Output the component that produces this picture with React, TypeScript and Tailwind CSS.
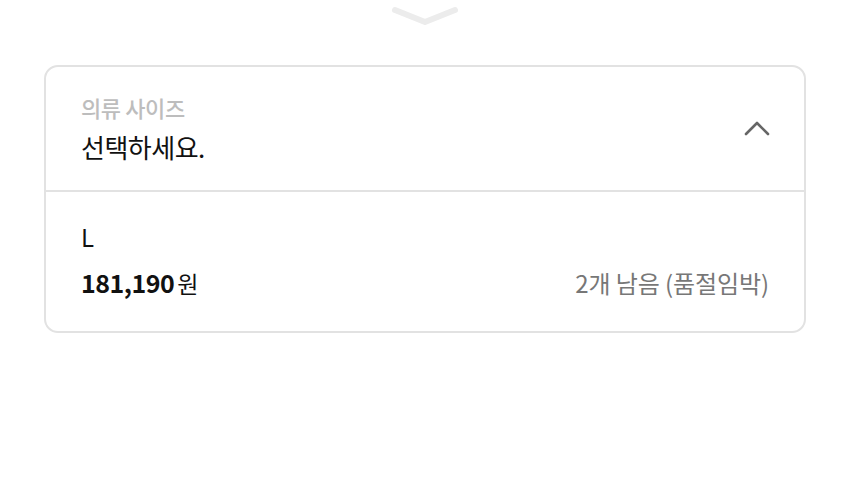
import React from 'react';

const font = { fontFamily: '"Noto Sans CJK KR", "Noto Sans", sans-serif' };

export default function App() {
  return (
    <div className="w-[850px] h-[498px] bg-white flex flex-col items-center" style={font}>
      {/* drag handle */}
      <svg width="68" height="22" viewBox="0 0 68 22" className="mt-[5px]">
        <path d="M4 5 L34 17 L64 5" fill="none" stroke="#ececec" strokeWidth="6" strokeLinecap="round" strokeLinejoin="round" />
      </svg>

      <div className="mt-[38px] w-[762px] border-2 border-[#e2e2e2] rounded-[14px] flex flex-col">
        <div className="h-[125px] pl-[35px] pr-[33px] flex items-center justify-between border-b-2 border-[#e2e2e2]">
          <div className="flex flex-col">
            <span className="text-[22px] leading-[28px] text-[#bdbdbd] font-medium tracking-[-0.4px]">의류 사이즈</span>
            <span className="text-[26px] leading-[34px] text-[#111] mt-[9px] tracking-[-0.5px]">선택하세요.</span>
          </div>
          <svg width="28" height="18" viewBox="0 0 28 18" className="mb-[2px]">
            <path d="M3 15 L14 4 L25 15" fill="none" stroke="#666" strokeWidth="2.6" strokeLinecap="round" strokeLinejoin="round" />
          </svg>
        </div>
        <div className="h-[139px] pl-[35px] pr-[35px] flex flex-col pt-[30px]">
          <span className="text-[24px] leading-[30px] text-[#111]">L</span>
          <div className="flex items-center justify-between mt-[14px]">
            <div className="flex items-baseline">
              <span className="text-[25px] leading-[32px] font-bold text-[#111] tracking-[-0.5px]">181,190</span>
              <span className="text-[23px] leading-[32px] text-[#111] ml-[3px]">원</span>
            </div>
            <span className="text-[24px] leading-[32px] text-[#777] tracking-[-0.1px]">2개 남음 (품절임박)</span>
          </div>
        </div>
      </div>
    </div>
  );
}
